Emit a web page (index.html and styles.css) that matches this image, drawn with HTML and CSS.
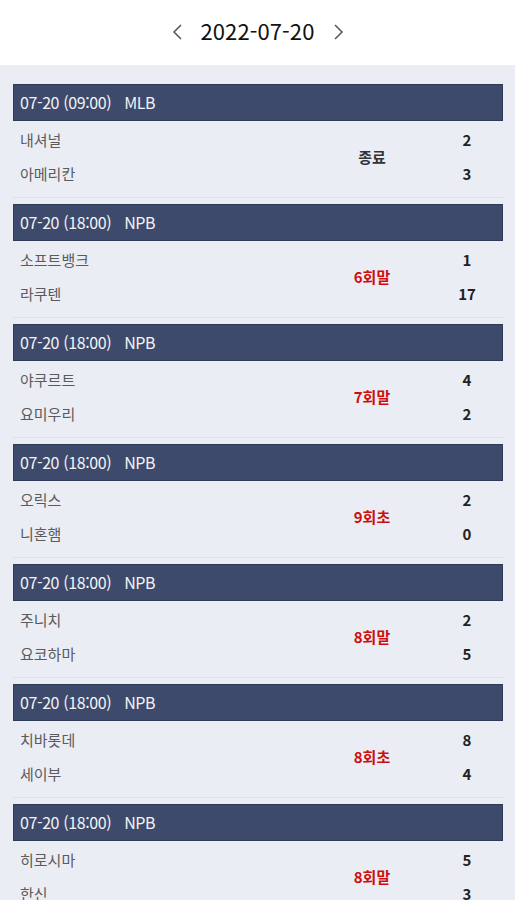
FILE: index.html
```html
<!DOCTYPE html>
<html lang="ko">

<head>
    <meta charset="UTF-8">
    <meta name="viewport" content="width=device-width, initial-scale=1.0">
    <title>경기 결과</title>
    <link rel="stylesheet" href="styles.css">
</head>

<body>
    <div class="date-bar">
        <svg class="arrow" width="12" height="18" viewBox="0 0 12 18">
            <polyline points="10,2 3,9 10,16" fill="none" stroke="#555" stroke-width="1.5" />
        </svg>
        <span class="date">2022-07-20</span>
        <svg class="arrow" width="12" height="18" viewBox="0 0 12 18">
            <polyline points="2,2 9,9 2,16" fill="none" stroke="#555" stroke-width="1.5" />
        </svg>
    </div>

    <div class="list">
        <div class="game">
            <div class="game-head">07-20 (09:00)<span class="league">MLB</span></div>
            <div class="game-body">
                <div class="team">내셔널</div>
                <div class="status end">종료</div>
                <div class="score">2</div>
                <div class="team">아메리칸</div>
                <div class="score">3</div>
            </div>
        </div>

        <div class="game">
            <div class="game-head">07-20 (18:00)<span class="league">NPB</span></div>
            <div class="game-body">
                <div class="team">소프트뱅크</div>
                <div class="status">6회말</div>
                <div class="score">1</div>
                <div class="team">라쿠텐</div>
                <div class="score">17</div>
            </div>
        </div>

        <div class="game">
            <div class="game-head">07-20 (18:00)<span class="league">NPB</span></div>
            <div class="game-body">
                <div class="team">야쿠르트</div>
                <div class="status">7회말</div>
                <div class="score">4</div>
                <div class="team">요미우리</div>
                <div class="score">2</div>
            </div>
        </div>

        <div class="game">
            <div class="game-head">07-20 (18:00)<span class="league">NPB</span></div>
            <div class="game-body">
                <div class="team">오릭스</div>
                <div class="status">9회초</div>
                <div class="score">2</div>
                <div class="team">니혼햄</div>
                <div class="score">0</div>
            </div>
        </div>

        <div class="game">
            <div class="game-head">07-20 (18:00)<span class="league">NPB</span></div>
            <div class="game-body">
                <div class="team">주니치</div>
                <div class="status">8회말</div>
                <div class="score">2</div>
                <div class="team">요코하마</div>
                <div class="score">5</div>
            </div>
        </div>

        <div class="game">
            <div class="game-head">07-20 (18:00)<span class="league">NPB</span></div>
            <div class="game-body">
                <div class="team">치바롯데</div>
                <div class="status">8회초</div>
                <div class="score">8</div>
                <div class="team">세이부</div>
                <div class="score">4</div>
            </div>
        </div>

        <div class="game">
            <div class="game-head">07-20 (18:00)<span class="league">NPB</span></div>
            <div class="game-body">
                <div class="team">히로시마</div>
                <div class="status">8회말</div>
                <div class="score">5</div>
                <div class="team">한신</div>
                <div class="score">3</div>
            </div>
        </div>
    </div>
</body>

</html>
```

FILE: styles.css
```css
body {
    margin: 0;
    font-family: "Noto Sans CJK KR", "Noto Sans", sans-serif;
    background-color: #eaedf4;
}

.date-bar {
    height: 65px;
    box-sizing: border-box;
    padding-bottom: 5px;
    background-color: #ffffff;
    display: flex;
    align-items: center;
    justify-content: center;
    gap: 18px;
}

.date {
    font-size: 22px;
    color: #111;
    letter-spacing: 0.1px;
}

.arrow {
    display: block;
    margin-top: 3px;
}

.list {
    padding: 19px 12px 0 13px;
}

.game {
    margin-bottom: 6px;
}

.game-head {
    height: 37px;
    box-sizing: border-box;
    background-color: #3d4a6b;
    border: 1px solid #2f3a56;
    color: #f2f3f6;
    font-size: 16px;
    padding-left: 6px;
    letter-spacing: -0.4px;
    line-height: 34px;
}

.league {
    margin-left: 13px;
}

.game-body {
    display: grid;
    grid-template-columns: 1fr 80px 52px;
    grid-template-rows: 34px 34px;
    column-gap: 29px;
    padding: 1px 10px 7px 7px;
    border-bottom: 1px solid #dde1e9;
    align-items: center;
}

.team {
    font-size: 15px;
    color: #5b5b5b;
}

.status {
    grid-row: 1 / 3;
    grid-column: 2;
    text-align: center;
    font-size: 15px;
    font-weight: bold;
    color: #d00d0d;
}

.status.end {
    color: #333;
}

.score {
    grid-column: 3;
    text-align: center;
    font-size: 15px;
    font-weight: bold;
    color: #222;
}
```
